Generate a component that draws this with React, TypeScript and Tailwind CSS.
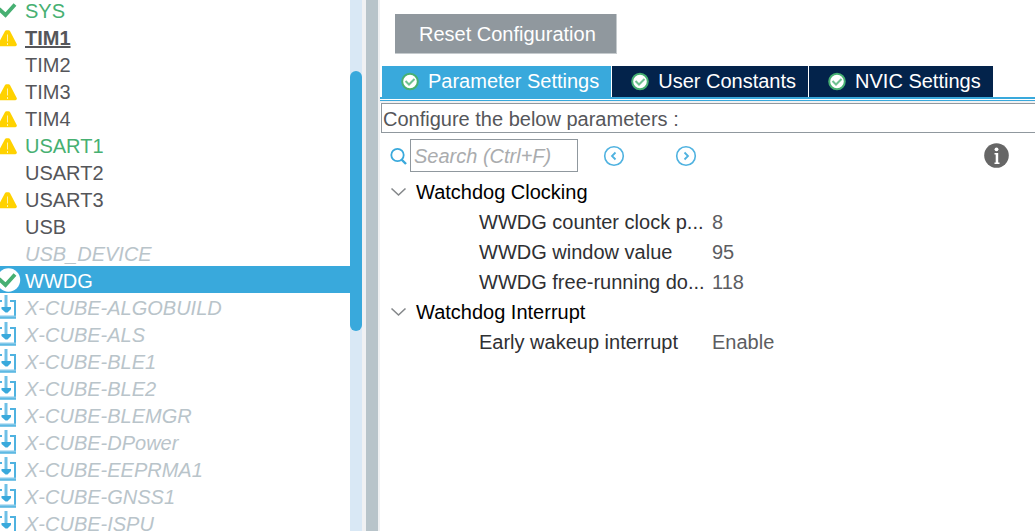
import { useState } from "react";

type ItemStatus = "ok" | "warning" | "download" | "none";

interface Peripheral {
  name: string;
  status: ItemStatus;
  className: string;
}

interface Parameter {
  name: string;
  value: string;
}

const NORMAL = "text-[#55565a]";
const GREEN = "text-[#47b072]";
const MUTED = "italic text-[#b9c4ca]";

const peripherals: Peripheral[] = [
  { name: "SYS", status: "ok", className: GREEN },
  { name: "TIM1", status: "warning", className: "font-bold underline decoration-2 underline-offset-1 text-[#55565a]" },
  { name: "TIM2", status: "none", className: NORMAL },
  { name: "TIM3", status: "warning", className: NORMAL },
  { name: "TIM4", status: "warning", className: NORMAL },
  { name: "USART1", status: "warning", className: GREEN },
  { name: "USART2", status: "none", className: NORMAL },
  { name: "USART3", status: "warning", className: NORMAL },
  { name: "USB", status: "none", className: NORMAL },
  { name: "USB_DEVICE", status: "none", className: MUTED },
  { name: "WWDG", status: "ok", className: NORMAL },
  { name: "X-CUBE-ALGOBUILD", status: "download", className: MUTED },
  { name: "X-CUBE-ALS", status: "download", className: MUTED },
  { name: "X-CUBE-BLE1", status: "download", className: MUTED },
  { name: "X-CUBE-BLE2", status: "download", className: MUTED },
  { name: "X-CUBE-BLEMGR", status: "download", className: MUTED },
  { name: "X-CUBE-DPower", status: "download", className: MUTED },
  { name: "X-CUBE-EEPRMA1", status: "download", className: MUTED },
  { name: "X-CUBE-GNSS1", status: "download", className: MUTED },
  { name: "X-CUBE-ISPU", status: "download", className: MUTED },
];

const tabs = ["Parameter Settings", "User Constants", "NVIC Settings"];

const groups: { title: string; params: Parameter[] }[] = [
  {
    title: "Watchdog Clocking",
    params: [
      { name: "WWDG counter clock p...", value: "8" },
      { name: "WWDG window value", value: "95" },
      { name: "WWDG free-running do...", value: "118" },
    ],
  },
  {
    title: "Watchdog Interrupt",
    params: [{ name: "Early wakeup interrupt", value: "Enable" }],
  },
];

export default function App() {
  const [selected, setSelected] = useState("WWDG");
  const [activeTab, setActiveTab] = useState(tabs[0]);
  const [closed, setClosed] = useState<string[]>([]);

  const toggleGroup = (title: string) => {
    setClosed((prev) =>
      prev.includes(title) ? prev.filter((t) => t !== title) : [...prev, title]
    );
  };

  return (
    <div className="flex h-screen overflow-hidden bg-white font-['Liberation_Sans',Arial,sans-serif] text-[20px] leading-[27px]">
      {/* Peripheral list */}
      <nav className="w-[350px] shrink-0 overflow-hidden">
        <ul className="-mt-1">
          {peripherals.map((item) => (
            <li key={item.name}>
              <button
                type="button"
                onClick={() => setSelected(item.name)}
                className={`flex h-[27px] w-full items-start text-left ${
                  item.name === selected ? "bg-[#39a9dc] text-white" : item.className
                }`}
              >
                <span className="-ml-1 mr-1 h-[27px] w-[25px] shrink-0">
                  <StatusIcon status={item.status} selected={item.name === selected} />
                </span>
                <span className="pt-1 leading-[23px]">{item.name}</span>
              </button>
            </li>
          ))}
        </ul>
      </nav>

      {/* Scrollbar */}
      <div className="w-3 shrink-0 bg-[#d9e8f5] pt-[71px]">
        <div className="h-[260px] rounded-full bg-[#39a9dc]" />
      </div>
      <div className="w-4 shrink-0 border-l-4 border-[#f0f1f3] bg-[#b8c4ca]" />

      {/* Configuration */}
      <main className="min-w-0 flex-1 border-l-2 border-[#f0f1f3]">
        <div className="px-[15px] pt-[14px] pb-3">
          <button
            type="button"
            className="block h-10 border-r border-b border-[#c5cacd] bg-[#90989e] pt-[2px] pr-5 pl-6 text-white"
          >
            Reset Configuration
          </button>
        </div>

        <div role="tablist" className="flex gap-px border-b-2 border-[#39a9dc] pl-[2px]">
          {tabs.map((tab) => (
            <button
              key={tab}
              type="button"
              role="tab"
              aria-selected={tab === activeTab}
              onClick={() => setActiveTab(tab)}
              className={`flex h-[31px] items-center gap-2 pr-3 pl-[18px] text-white ${
                tab === activeTab ? "bg-[#39a9dc]" : "bg-[#03234b]"
              }`}
            >
              <TabCheckIcon />
              {tab}
            </button>
          ))}
        </div>
        <div className="mt-px h-[3px] border-t border-[#39a9dc] bg-[#f0f1f3]" />

        <p className="ml-px h-[30px] border border-r-0 border-[#90989e] pt-[2px] pl-px text-[#55565a]">
          Configure the below parameters :
        </p>

        <div className="mt-[6px] flex items-center pr-[26px] pl-[9px]">
          <label htmlFor="search" aria-label="Search" className="mr-px">
            <SearchIcon />
          </label>
          <input
            id="search"
            type="text"
            placeholder="Search (Ctrl+F)"
            className="h-[33px] w-[168px] border border-[#90989e] px-[3px] pt-[2px] outline-none placeholder:italic placeholder:text-[#aaacae]"
          />
          <div className="ml-[25px] flex gap-[50px]">
            <button type="button" aria-label="Previous">
              <ArrowIcon d="M12.5 7.5 9 11l3.5 3.5" />
            </button>
            <button type="button" aria-label="Next">
              <ArrowIcon d="M9.5 7.5 13 11l-3.5 3.5" />
            </button>
          </div>
          <button type="button" aria-label="Information" className="ml-auto">
            <InfoIcon />
          </button>
        </div>

        <table className="mt-[5px] w-full table-fixed">
          <colgroup>
            <col className="w-[326px]" />
            <col />
          </colgroup>
          {groups.map((group) => (
            <tbody key={group.title}>
              <tr className="h-[30px]">
                <th colSpan={2} className="p-0 text-left font-normal text-black">
                  <button
                    type="button"
                    aria-expanded={!closed.includes(group.title)}
                    onClick={() => toggleGroup(group.title)}
                    className="flex items-center gap-2 pl-[10px]"
                  >
                    <ChevronIcon />
                    {group.title}
                  </button>
                </th>
              </tr>
              {!closed.includes(group.title) &&
                group.params.map((param) => (
                  <tr key={param.name} className="h-[30px]">
                    <td className="truncate p-0 pl-[99px] text-[#2f3033]">{param.name}</td>
                    <td className="p-0 pl-[6px] text-[#5c5d61]">{param.value}</td>
                  </tr>
                ))}
            </tbody>
          ))}
        </table>
      </main>
    </div>
  );
}

// Icons
function StatusIcon({ status, selected }: { status: ItemStatus; selected: boolean }) {
  if (status === "none") return null;
  return (
    <svg width="25" height="27" viewBox="-4 0 25 27" fill="none" aria-hidden="true">
      {status === "ok" && (
        <>
          {selected && <circle cx="8.5" cy="14" r="11.7" fill="#fff" />}
          <path d="M-1 13 5.5 19 15 8.5" stroke="#47b072" strokeWidth="3.8" />
        </>
      )}
      {status === "warning" && (
        <>
          <path
            d="M6.5 9h2L15 21.5H0Z"
            fill="#ffd200"
            stroke="#ffd200"
            strokeWidth="3.6"
            strokeLinejoin="round"
          />
          <path d="M7.5 11.5v7M7.5 20v2" stroke="#fff3b0" strokeWidth="1" />
        </>
      )}
      {status === "download" && (
        <>
          <path d="M10 8h5v16M2 8h-4v16" stroke="#4fb2e0" strokeWidth="2" />
          <path d="M-3 24h19" stroke="#84c9ea" strokeWidth="3" />
          <path d="M-3 25h19" stroke="#39a9dc" strokeWidth="1" />
          <path d="M6 2v16" stroke="#6fc0e6" strokeWidth="3" />
          <path d="M1.5 14H11v2l-3.5 3.5h-2L1.5 16Z" fill="#39a9dc" />
        </>
      )}
    </svg>
  );
}

function TabCheckIcon() {
  return (
    <svg width="20" height="20" viewBox="0 0 20 20" fill="none" aria-hidden="true">
      <circle cx="10" cy="9.5" r="7.8" fill="#fff" stroke="#47b072" strokeWidth="2" />
      <path d="m5.5 9 3.5 3.5L14.5 7" stroke="#6fc191" strokeWidth="2" />
    </svg>
  );
}

function SearchIcon() {
  return (
    <svg width="20" height="20" viewBox="0 0 20 20" fill="none" stroke="#39a9dc" aria-hidden="true">
      <circle cx="8.5" cy="9" r="6.2" strokeWidth="1.8" />
      <path d="m12.5 13.5 4.5 4.5" strokeWidth="2.4" />
    </svg>
  );
}

function ArrowIcon({ d }: { d: string }) {
  return (
    <svg width="22" height="22" viewBox="0 0 22 22" fill="none" stroke="#4fb2e0" aria-hidden="true">
      <circle cx="11" cy="11" r="9.3" strokeWidth="1.6" />
      <path d={d} strokeWidth="1.8" />
    </svg>
  );
}

function InfoIcon() {
  return (
    <svg width="25" height="25" viewBox="0 0 25 25" aria-hidden="true">
      <circle cx="12.5" cy="12.5" r="12.3" fill="#666" />
      <circle cx="12.5" cy="6.3" r="1.9" fill="#fff" />
      <path d="M10.5 10h3.7v9.5h1.3V21h-5v-1.5h1.2v-8h-1.2Z" fill="#fff" />
    </svg>
  );
}

function ChevronIcon() {
  return (
    <svg width="18" height="18" viewBox="0 0 18 18" fill="none" aria-hidden="true">
      <path d="m1.5 5.5 7 6.5 7-6.5" stroke="#85888b" strokeWidth="1.6" />
    </svg>
  );
}
